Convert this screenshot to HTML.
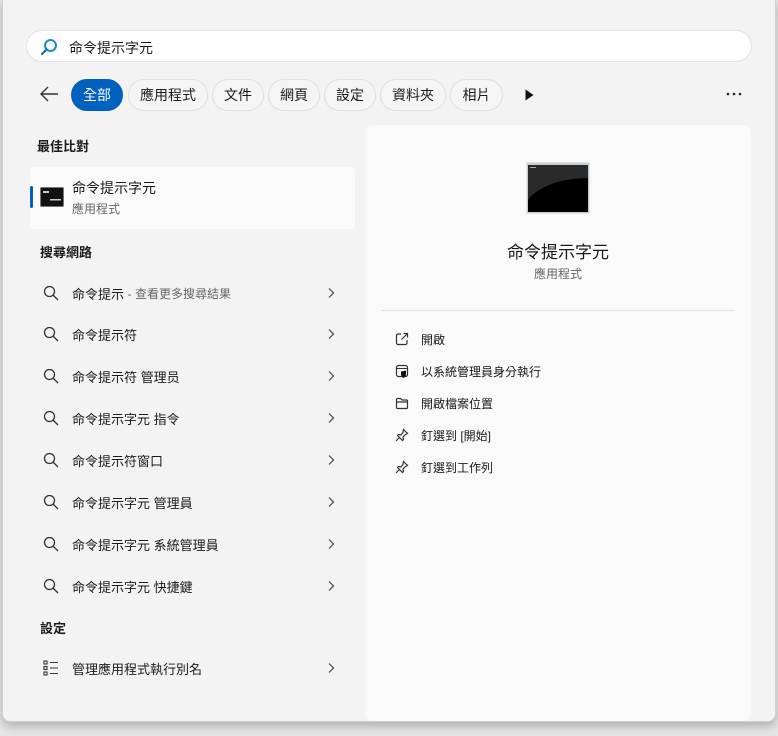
<!DOCTYPE html>
<html><head><meta charset="utf-8"><style>
*{margin:0;padding:0;box-sizing:border-box}
body{width:778px;height:736px;background:#e6e6e6;font-family:"Liberation Sans","Noto Sans CJK TC",sans-serif;color:#1a1a1a;position:relative;overflow:hidden}
.win{position:absolute;left:2px;top:0;width:774px;height:722px;background:#f3f3f3;border-radius:0 0 8px 8px;box-shadow:0 4px 10px rgba(0,0,0,.25);border:1px solid #d0d0d0;border-top:none}
.abs{position:absolute}
.search{left:26px;top:30px;width:726px;height:32px;background:#fff;border:1px solid #e2e2e2;border-radius:16px}
.chip{position:absolute;top:79px;height:32px;border:1px solid #e0e0e0;border-radius:16px;font-size:14px;display:flex;align-items:center;justify-content:center;background:#f5f5f5}
.chip.on{background:#0062be;color:#fff;border-color:#0062be}
.h{position:absolute;left:40px;font-size:13px;font-weight:bold}
.row{position:absolute;left:43px;font-size:13px;display:flex;align-items:center;height:20px}
.row svg{margin-right:13px}
.chev{position:absolute;left:327px}
.act{position:absolute;left:395px;font-size:12px;display:flex;align-items:center;height:18px}
.act svg{margin-right:12px}
</style></head><body>
<div class="win"></div>
<div class="abs search">
<svg class="abs" style="left:13px;top:7px" width="18" height="18" viewBox="0 0 18 18"><circle cx="10.5" cy="7.5" r="5.5" fill="none" stroke="#1a8fd0" stroke-width="2"/><path d="M6.5 11.5 L2 16" stroke="#1a6fb8" stroke-width="2.2" stroke-linecap="round"/></svg>
<span class="abs" style="left:42px;top:7px;font-size:14px">命令提示字元</span>
</div>
<svg class="abs" style="left:38px;top:84px" width="22" height="20" viewBox="0 0 22 20"><path d="M20 10H3M10 3L3 10l7 7" fill="none" stroke="#333" stroke-width="1.4"/></svg>
<div class="chip on" style="left:71px;width:52px">全部</div>
<div class="chip" style="left:128px;width:80px">應用程式</div>
<div class="chip" style="left:212px;width:52px">文件</div>
<div class="chip" style="left:268px;width:52px">網頁</div>
<div class="chip" style="left:324px;width:52px">設定</div>
<div class="chip" style="left:380px;width:66px">資料夾</div>
<div class="chip" style="left:450px;width:53px">相片</div>
<svg class="abs" style="left:524px;top:88px" width="12" height="14"><path d="M1.5 1.5L9.5 7L1.5 12.5Z" fill="#111"/></svg>
<svg class="abs" style="left:726px;top:92px" width="16" height="4"><circle cx="2" cy="2" r="1.3" fill="#222"/><circle cx="8" cy="2" r="1.3" fill="#222"/><circle cx="14" cy="2" r="1.3" fill="#222"/></svg>

<div class="h" style="top:136px;left:37px">最佳比對</div>
<div class="abs" style="left:30px;top:167px;width:325px;height:62px;background:#fbfbfb;border-radius:4px"></div>
<div class="abs" style="left:30px;top:186px;width:3px;height:22px;background:#0062be;border-radius:2px"></div>
<svg class="abs" style="left:40px;top:187px" width="24" height="20"><rect x="0.5" y="0.5" width="23" height="19" rx="1" fill="#111" stroke="#777"/><rect x="3" y="4" width="6" height="2" fill="#ccc"/><rect x="10" y="12" width="11" height="1.5" fill="#ccc"/></svg>
<span class="abs" style="left:72px;top:178px;font-size:14px">命令提示字元</span>
<span class="abs" style="left:72px;top:200px;font-size:12px;color:#666">應用程式</span>

<div class="h" style="top:242px">搜尋網路</div>
<div class="row" style="top:283px"><svg width="16" height="16"><circle cx="6.5" cy="6.5" r="5" fill="none" stroke="#333" stroke-width="1.3"/><path d="M10 10l5 5" stroke="#333" stroke-width="1.3"/></svg>命令提示&nbsp;<span style="color:#666;font-size:12px">- 查看更多搜尋結果</span></div><svg class="chev" style="top:287px" width="8" height="12"><path d="M2 1.5l4.5 4.5L2 10.5" fill="none" stroke="#444" stroke-width="1.2"/></svg>
<div class="row" style="top:324px"><svg width="16" height="16"><circle cx="6.5" cy="6.5" r="5" fill="none" stroke="#333" stroke-width="1.3"/><path d="M10 10l5 5" stroke="#333" stroke-width="1.3"/></svg>命令提示符</div><svg class="chev" style="top:328px" width="8" height="12"><path d="M2 1.5l4.5 4.5L2 10.5" fill="none" stroke="#444" stroke-width="1.2"/></svg>
<div class="row" style="top:366px"><svg width="16" height="16"><circle cx="6.5" cy="6.5" r="5" fill="none" stroke="#333" stroke-width="1.3"/><path d="M10 10l5 5" stroke="#333" stroke-width="1.3"/></svg>命令提示符 管理员</div><svg class="chev" style="top:370px" width="8" height="12"><path d="M2 1.5l4.5 4.5L2 10.5" fill="none" stroke="#444" stroke-width="1.2"/></svg>
<div class="row" style="top:408px"><svg width="16" height="16"><circle cx="6.5" cy="6.5" r="5" fill="none" stroke="#333" stroke-width="1.3"/><path d="M10 10l5 5" stroke="#333" stroke-width="1.3"/></svg>命令提示字元 指令</div><svg class="chev" style="top:412px" width="8" height="12"><path d="M2 1.5l4.5 4.5L2 10.5" fill="none" stroke="#444" stroke-width="1.2"/></svg>
<div class="row" style="top:450px"><svg width="16" height="16"><circle cx="6.5" cy="6.5" r="5" fill="none" stroke="#333" stroke-width="1.3"/><path d="M10 10l5 5" stroke="#333" stroke-width="1.3"/></svg>命令提示符窗口</div><svg class="chev" style="top:454px" width="8" height="12"><path d="M2 1.5l4.5 4.5L2 10.5" fill="none" stroke="#444" stroke-width="1.2"/></svg>
<div class="row" style="top:492px"><svg width="16" height="16"><circle cx="6.5" cy="6.5" r="5" fill="none" stroke="#333" stroke-width="1.3"/><path d="M10 10l5 5" stroke="#333" stroke-width="1.3"/></svg>命令提示字元 管理員</div><svg class="chev" style="top:496px" width="8" height="12"><path d="M2 1.5l4.5 4.5L2 10.5" fill="none" stroke="#444" stroke-width="1.2"/></svg>
<div class="row" style="top:534px"><svg width="16" height="16"><circle cx="6.5" cy="6.5" r="5" fill="none" stroke="#333" stroke-width="1.3"/><path d="M10 10l5 5" stroke="#333" stroke-width="1.3"/></svg>命令提示字元 系統管理員</div><svg class="chev" style="top:538px" width="8" height="12"><path d="M2 1.5l4.5 4.5L2 10.5" fill="none" stroke="#444" stroke-width="1.2"/></svg>
<div class="row" style="top:576px"><svg width="16" height="16"><circle cx="6.5" cy="6.5" r="5" fill="none" stroke="#333" stroke-width="1.3"/><path d="M10 10l5 5" stroke="#333" stroke-width="1.3"/></svg>命令提示字元 快捷鍵</div><svg class="chev" style="top:580px" width="8" height="12"><path d="M2 1.5l4.5 4.5L2 10.5" fill="none" stroke="#444" stroke-width="1.2"/></svg>
<div class="h" style="top:618px">設定</div>
<div class="row" style="top:658px"><svg width="16" height="16"><g fill="none" stroke="#333" stroke-width="1.1"><rect x="1" y="1" width="3" height="3"/><rect x="1" y="6.5" width="3" height="3"/><rect x="1" y="12" width="3" height="3"/><path d="M7 2.5h8M7 8h8M7 13.5h8"/></g></svg>管理應用程式執行別名</div><svg class="chev" style="top:662px" width="8" height="12"><path d="M2 1.5l4.5 4.5L2 10.5" fill="none" stroke="#444" stroke-width="1.2"/></svg>

<div class="abs" style="left:365px;top:125px;width:386px;height:596px;background:#fafafa;border-radius:8px"></div>
<svg class="abs" style="left:526px;top:162px" width="64" height="52"><rect x="0.5" y="0.5" width="63" height="51" fill="#c8cdd4"/><rect x="2" y="3" width="60" height="47" fill="#000"/><path d="M2 3h60v13c-25 0-50 8-60 22z" fill="#2a2a2a"/><rect x="4" y="5" width="6" height="1" fill="#aaa"/></svg>
<div class="abs" style="left:365px;top:238px;width:386px;text-align:center;font-size:17px">命令提示字元</div>
<div class="abs" style="left:365px;top:265px;width:386px;text-align:center;font-size:12px;color:#666">應用程式</div>
<div class="abs" style="left:381px;top:310px;width:354px;height:1px;background:#e2e2e2"></div>
<div class="act" style="top:330px"><svg width="14" height="14" fill="none" stroke="#333" stroke-width="1.2"><path d="M6 2H3a1.5 1.5 0 0 0-1.5 1.5v7.5A1.5 1.5 0 0 0 3 12.5h7.5a1.5 1.5 0 0 0 1.5-1.5V8M8.5 1.5h4v4M12.5 1.5L6.5 7.5"/></svg>開啟</div>
<div class="act" style="top:362px"><svg width="14" height="14"><rect x="1.5" y="1.5" width="11" height="11" rx="2" fill="none" stroke="#333" stroke-width="1.2"/><path d="M1.5 4.5h11" stroke="#333"/><path d="M6 7.5l5-1v4c0 2-2 3-2.5 3.5C7 13 6 12 6 10z" fill="#111"/></svg>以系統管理員身分執行</div>
<div class="act" style="top:394px"><svg width="14" height="14" fill="none" stroke="#333" stroke-width="1.2"><path d="M1.5 3.5a1 1 0 0 1 1-1h3l1.5 1.5h4.5a1 1 0 0 1 1 1v6.5a1 1 0 0 1-1 1h-9a1 1 0 0 1-1-1zM1.5 6h11"/></svg>開啟檔案位置</div>
<div class="act" style="top:426px"><svg width="14" height="14" fill="none" stroke="#333" stroke-width="1.2"><path d="M8.5 1.5l4 4-2 1-2.5 2.5.5 2.5-1 1-5-5 1-1 2.5.5L8 4.5zM4.5 9.5L1 13"/></svg>釘選到 [開始]</div>
<div class="act" style="top:458px"><svg width="14" height="14" fill="none" stroke="#333" stroke-width="1.2"><path d="M8.5 1.5l4 4-2 1-2.5 2.5.5 2.5-1 1-5-5 1-1 2.5.5L8 4.5zM4.5 9.5L1 13"/></svg>釘選到工作列</div>
</body></html>
